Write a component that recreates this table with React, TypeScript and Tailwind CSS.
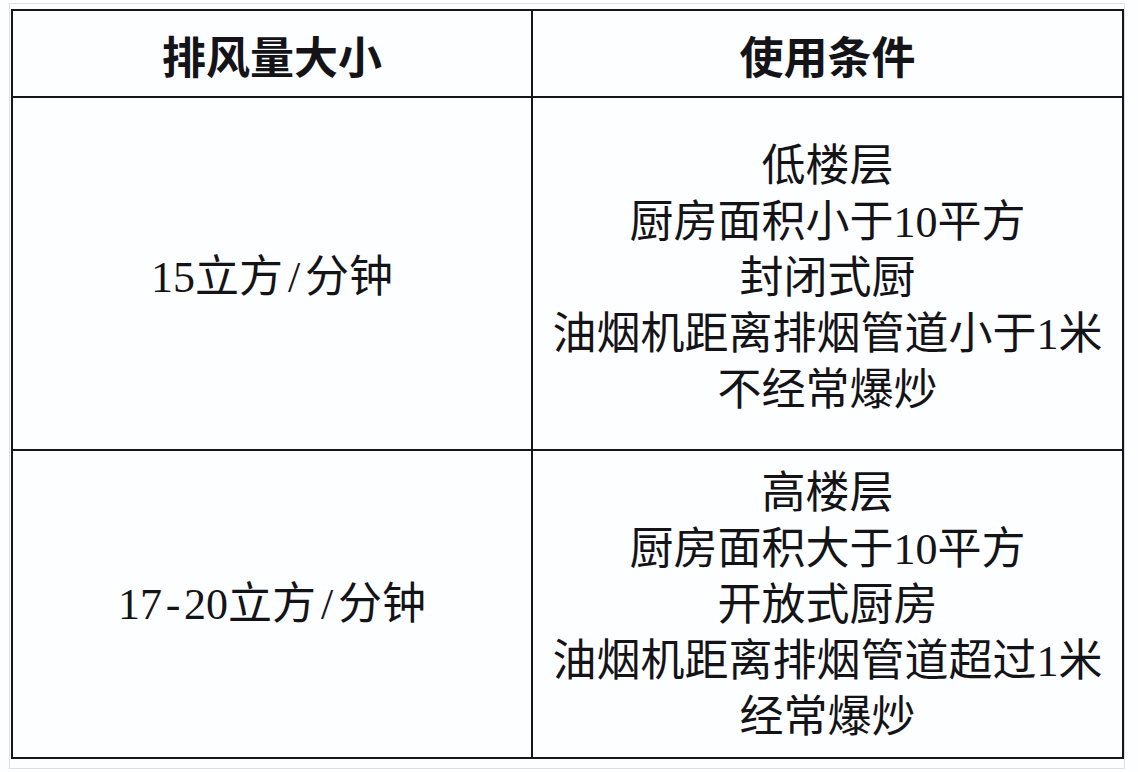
import React from "react";

const font = { fontFamily: '"Liberation Serif", "Noto Sans CJK SC", serif' };

function Half({ c }: { c: string }) {
  return <span className="inline-block w-[22px] text-center">{c}</span>;
}

export default function App() {
  const row1 = ["低楼层", "厨房面积小于10平方", "封闭式厨", "油烟机距离排烟管道小于1米", "不经常爆炒"];
  const row2 = ["高楼层", "厨房面积大于10平方", "开放式厨房", "油烟机距离排烟管道超过1米", "经常爆炒"];
  return (
    <div className="w-[1138px] h-[772px] bg-[#fdfeff] pt-[3px] pl-[9px] overflow-hidden">
      <div className="w-[1116px] h-[766px] border-t border-l border-r border-b border-[#dcdfe6] pt-[5px] pl-px">
        <div
          className="w-[1113px] grid grid-cols-[518px_2px_589px] grid-rows-[85px_2px_351px_2px_306px] border-2 border-[#15151c] bg-[#fdfeff] text-[#141418]"
          style={font}
        >
          <div className="flex items-center justify-center text-[44px] font-bold pt-[2px]" style={{ fontFamily: '"Noto Sans CJK SC", sans-serif' }}>
            排风量大小
          </div>
          <div className="bg-[#15151c]" />
          <div className="flex items-center justify-center text-[44px] font-bold pt-[2px]" style={{ fontFamily: '"Noto Sans CJK SC", sans-serif' }}>
            使用条件
          </div>
          <div className="col-span-3 bg-[#15151c]" />
          <div className="flex items-center justify-center text-[44px] leading-[56px] pt-[8px] whitespace-nowrap">
            <span>
              15立方<Half c="/" />分钟
            </span>
          </div>
          <div className="bg-[#15151c]" />
          <div className="flex flex-col items-center justify-center text-[44px] leading-[56px] pt-[10px] whitespace-nowrap">
            {row1.map((t) => (
              <div key={t}>{t}</div>
            ))}
          </div>
          <div className="col-span-3 bg-[#15151c]" />
          <div className="flex items-center justify-center text-[44px] leading-[56px] pt-[2px] whitespace-nowrap">
            <span>
              17<Half c="-" />20立方<Half c="/" />分钟
            </span>
          </div>
          <div className="bg-[#15151c]" />
          <div className="flex flex-col items-center justify-center text-[44px] leading-[56px] pt-[3px] whitespace-nowrap">
            {row2.map((t) => (
              <div key={t}>{t}</div>
            ))}
          </div>
        </div>
      </div>
    </div>
  );
}
